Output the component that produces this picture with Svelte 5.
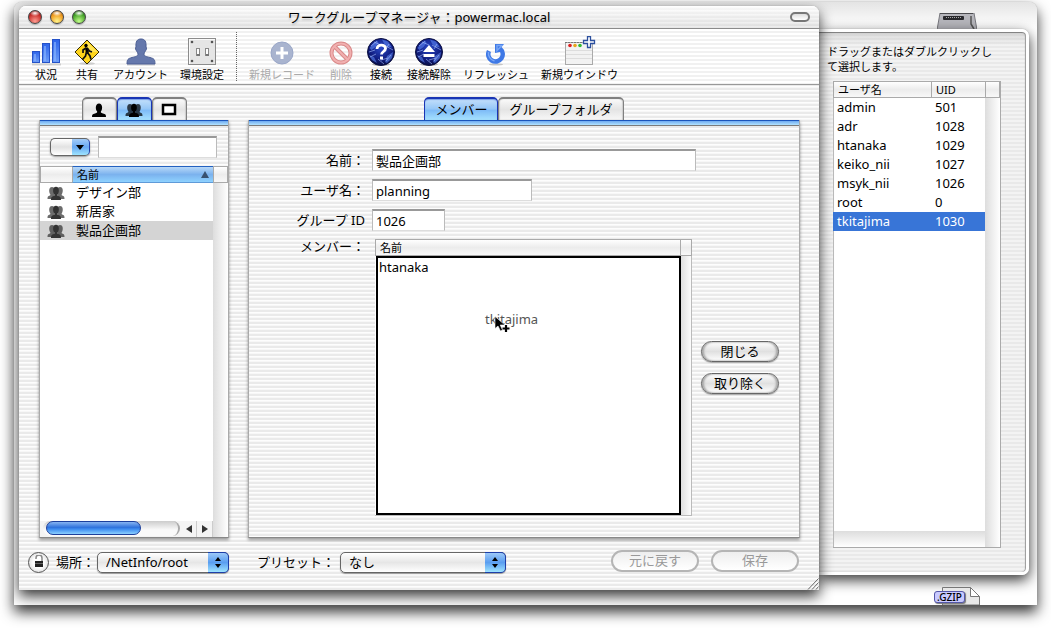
<script>
  const groups = ['デザイン部', '新居家', '製品企画部'];
  const users = [
    ['admin', '501'],
    ['adr', '1028'],
    ['htanaka', '1029'],
    ['keiko_nii', '1027'],
    ['msyk_nii', '1026'],
    ['root', '0'],
    ['tkitajima', '1030']
  ];
  const members = ['htanaka'];
  let tab = $state('members');
  let kind = $state('groups');
  let selectedGroup = $state('製品企画部');
  let selectedUser = $state('tkitajima');
</script>

{#snippet group()}
  <svg width="18" height="14" viewBox="0 0 18 14" aria-hidden="true">
    <g fill="currentColor">
      <g opacity=".72">
        <path d="M.5 13c0-2 .2-3 2.400-3.500.6-.2.6-1 .2-1.500C1.800 6 1.500 1 5 1s3 5 2 7l.5 2v3zM17.500 13c0-2-.2-3-2.400-3.500-.6-.2-.6-1-.2-1.500C16.200 6 16.500 1 13 1s-3 5-2 7l-.5 2v3z" />
      </g>
      <path d="M4 14c0-2.500.5-3.500 2.900-4 .8-.3.7-1.100.3-1.700C5.600 6 5.500.7 9 .7s3.400 5.300 1.800 7.600c-.4.6-.5 1.400.3 1.700 2.400.5 2.900 1.500 2.900 4z" />
    </g>
  </svg>
{/snippet}

{#snippet globe()}
  <ellipse cx="14" cy="26.500" rx="9" ry="1.500" fill="#888" opacity=".6" />
  <circle cx="14" cy="14" r="13.500" fill="url(#globe)" stroke="#0c1040" />
  <path d="M2.500 10l4-5 4-2 1 2-3 4-4 3zM15 1.500l6 2 4 6-5-1-3-3zM2 17l5 2 3 6-5-3zM20 18l6-4-1 6-5 5-2-1z" fill="#5c86f5" opacity=".6" />
  <path d="M2 14l6-2M7 4l7 3M17 7l9 5M11 21l6 5M4 8l6-5M19 23l5-6M3 19l6-3M22 6l-3 5M14 22l7-2" stroke="#a9c2ff" fill="none" opacity=".6" />
{/snippet}

<main class="desktop">
  <div class="back">
    <svg class="drive" width="40" height="17" viewBox="0 0 40 17" aria-hidden="true">
      <path d="M3 0h34l3 17H0z" fill="#b6b6bc" stroke="#77777d" />
      <path d="M3 .500h33" stroke="#4b4b4f" />
      <rect x="6" y="3" width="21" height="4" rx="1" fill="#29292d" />
      <path d="M9 4.500h15" stroke="#aaa" stroke-dasharray="1 1" />
      <path d="M34 3v8l3 5" stroke="#555" fill="none" stroke-width="1.500" />
    </svg>

    <section class="window" aria-label="ワークグループマネージャ">
      <header class="titlebar">
        <div class="lights">
          <button class="light red" aria-label="閉じる"></button>
          <button class="light yellow" aria-label="しまう"></button>
          <button class="light green" aria-label="拡大"></button>
        </div>
        <h1>ワークグループマネージャ：powermac.local</h1>
        <div class="right-end"><button class="pill" aria-label="ツールバー"></button></div>
      </header>

      <nav class="toolbar">
        <button class="tool">
          <svg width="30" height="28" viewBox="0 0 30 28" aria-hidden="true">
            <path d="M1 25.500h29v2H1z" fill="#999" opacity=".4" />
            <g fill="url(#bar)" stroke="#2552c8">
              <rect x="1.500" y="13.500" width="7" height="11" /><rect x="11.500" y="5.500" width="7" height="19" /><rect x="21.500" y="1.500" width="7" height="23" />
            </g>
            <path d="M4 16v7M14 8v15M24 4v19" stroke="#8db8ff" stroke-width="2" opacity=".6" />
          </svg>
          <span>状況</span>
        </button>
        <button class="tool">
          <svg width="26" height="28" viewBox="0 0 26 28" aria-hidden="true">
            <ellipse cx="13" cy="25.500" rx="8" ry="1.500" fill="#999" opacity=".4" />
            <path d="M13 2l12 12-12 12L1 14z" fill="#ffd51c" stroke="#332b05" />
            <path d="M13 3.500L23.500 14 13 14z" fill="#fff080" opacity=".6" />
            <circle cx="12" cy="7.500" r="1.700" />
            <path d="M11 9.500h3l1 5-3 1z" />
            <path d="M12 10l-3 2v3M13.500 10.500l2 2.500 2.500 1M13 14l3 4 1 3.500M12.500 14l-1 4-3 3.500" fill="none" stroke="#111" stroke-width="1.700" />
          </svg>
          <span>共有</span>
        </button>
        <button class="tool">
          <svg width="30" height="28" viewBox="0 0 30 28" aria-hidden="true">
            <path d="M1 26.500h28v1H1z" fill="#999" opacity=".5" />
            <path d="M1 26c0-4.500 1-5.500 5-6.500 4-1 6-1.300 6-3.500 0-1.200-.7-1.500-1.200-2.800-1-.2-1.800-3.700-.8-4.200C9.600 3.500 11 1 15 1s5.400 2.500 5 8c1 .5.2 4-.8 4.200-.5 1.300-1.200 1.600-1.200 2.800 0 2.200 2 2.500 6 3.500 4 1 5 2 5 6.500z" fill="#6578ac" stroke="#4d5f94" />
          </svg>
          <span>アカウント</span>
        </button>
        <button class="tool">
          <svg width="28" height="28" viewBox="0 0 28 28" aria-hidden="true">
            <rect x=".5" y=".5" width="27" height="26" fill="#e5e5e5" stroke="#8c8c8c" />
            <path d="M1.500 26V1.500H27" fill="none" stroke="#fafafa" />
            <g fill="#555"><circle cx="4" cy="4" r="1.300" /><circle cx="24" cy="4" r="1.300" /><circle cx="4" cy="23" r="1.300" /><circle cx="24" cy="23" r="1.300" /></g>
            <g fill="#fff" stroke="#888"><rect x="8.500" y="10.500" width="3" height="7" /><rect x="17.500" y="10.500" width="3" height="7" /></g>
            <path d="M9 16h3v2H9zM18 16h3v2h-3z" fill="#777" />
          </svg>
          <span>環境設定</span>
        </button>
        <i class="divider"></i>
        <button class="tool" disabled>
          <svg width="26" height="28" viewBox="0 0 26 28" aria-hidden="true">
            <circle cx="13" cy="15" r="11" fill="#a9b4cf" stroke="#9aa7c8" />
            <path d="M13 9v12M7 15h12" stroke="#fff" stroke-width="3" />
          </svg>
          <span>新規レコード</span>
        </button>
        <button class="tool" disabled>
          <svg width="26" height="28" viewBox="0 0 26 28" aria-hidden="true">
            <circle cx="13" cy="15" r="9.500" fill="none" stroke="#d98a8a" stroke-width="4" />
            <path d="M6.500 8.500l13 13" stroke="#d98a8a" stroke-width="4" />
            <circle cx="13" cy="15" r="9.500" fill="none" stroke="#f1b0b0" stroke-width="2" />
            <path d="M6.500 8.500l13 13" stroke="#f1b0b0" stroke-width="2" />
          </svg>
          <span>削除</span>
        </button>
        <button class="tool">
          <svg width="28" height="28" viewBox="0 0 28 28" aria-hidden="true">
            {@render globe()}
            <path d="M10 11c0-5 8.500-5 8.500-.5 0 3-4 3-4 6" fill="none" stroke="#fff" stroke-width="2.800" />
            <rect x="13" y="18.500" width="3" height="3" fill="#fff" />
          </svg>
          <span>接続</span>
        </button>
        <button class="tool">
          <svg width="28" height="28" viewBox="0 0 28 28" aria-hidden="true">
            {@render globe()}
            <path d="M14 7l6 7H8zM8.500 16h11v3h-11z" fill="#fff" />
          </svg>
          <span>接続解除</span>
        </button>
        <button class="tool">
          <svg width="22" height="28" viewBox="0 0 22 28" aria-hidden="true">
            <ellipse cx="11" cy="26.500" rx="7" ry="1" fill="#999" opacity=".5" />
            <path d="M2 12l4 2a5 5 0 1 0 9 0l-5 1V6h9l-2.500 3A9.500 9.500 0 1 1 2 12z" fill="#3f79e6" />
            <path d="M3.500 14a7.800 7.800 0 0 0 6 9M12 7.500h5l-5 5z" fill="none" stroke="#78a6f5" stroke-width="1.500" />
          </svg>
          <span>リフレッシュ</span>
        </button>
        <button class="tool">
          <svg width="32" height="30" viewBox="0 0 32 30" aria-hidden="true">
            <rect x="1.500" y="6.500" width="27" height="22" fill="#f2f2f2" stroke="#aaa" />
            <path d="M1 6.500h28" stroke="#777" stroke-dasharray="2 1" />
            <path d="M2 14.500h26M2 18.500h26M2 22.500h26" stroke="#ddd" />
            <circle cx="6" cy="9.500" r="1.800" fill="#d22" /><circle cx="11" cy="9.500" r="1.800" fill="#e7a51e" /><circle cx="16" cy="9.500" r="1.800" fill="#3b3" />
            <path d="M23.500.500h3v4h4v3h-4v4h-3v-4h-4v-3h4z" fill="#fff" stroke="#2c4f9e" stroke-width="1.300" />
          </svg>
          <span>新規ウインドウ</span>
        </button>
      </nav>

      <div class="body">
        <aside class="side">
          <div class="tabs" role="tablist">
            <button role="tab" aria-label="ユーザ" aria-selected={kind === 'users'} class:on={kind === 'users'} onclick={() => (kind = 'users')}>
              <svg width="16" height="14" viewBox="0 0 16 14" aria-hidden="true"><path d="M1 14c0-2.500.5-3 3-3.600C6.200 10 6.500 9.500 6 8.300 4.200 6.500 4.200.500 8 .500s3.800 6 2 7.800c-.5 1.200-.2 1.700 2 2.100 2.500.6 3 1.100 3 3.600z" /></svg>
            </button>
            <button role="tab" aria-label="グループ" aria-selected={kind === 'groups'} class:on={kind === 'groups'} onclick={() => (kind = 'groups')}>
              {@render group()}
            </button>
            <button role="tab" aria-label="コンピュータ" aria-selected={kind === 'lists'} class:on={kind === 'lists'} onclick={() => (kind = 'lists')}>
              <svg width="16" height="14" viewBox="0 0 16 14" aria-hidden="true"><rect x="2" y="2" width="12" height="9" fill="#fff" stroke="#000" stroke-width="2.500" /></svg>
            </button>
          </div>
          <div class="pane">
            <div class="search">
              <button class="mini" aria-label="検索条件"><i></i></button>
              <input aria-label="検索" />
            </div>
            <div class="list">
              <table>
                <colgroup><col class="c-icon" /><col /><col class="c-track" /></colgroup>
                <thead><tr><th></th><th class="sorted"><div>名前<i class="up"></i></div></th><th></th></tr></thead>
                <tbody>
                  {#each groups as name}
                    <tr class:chosen={name === selectedGroup} onclick={() => (selectedGroup = name)}>
                      <td class="ic">{@render group()}</td><td>{name}</td>
                    </tr>
                  {/each}
                </tbody>
              </table>
              <div class="hscroll">
                <div class="groove"><i class="thumb"></i></div>
                <button aria-label="左へ"><i class="left"></i></button>
                <button aria-label="右へ"><i class="right"></i></button>
              </div>
            </div>
          </div>
        </aside>

        <section class="detail">
          <div class="tabs text" role="tablist">
            <button role="tab" aria-selected={tab === 'members'} class:on={tab === 'members'} onclick={() => (tab = 'members')}>メンバー</button>
            <button role="tab" aria-selected={tab === 'folder'} class:on={tab === 'folder'} onclick={() => (tab = 'folder')}>グループフォルダ</button>
          </div>
          <div class="pane form">
            <label for="name">名前：</label>
            <input id="name" class="wide" value="製品企画部" />
            <label for="short">ユーザ名：</label>
            <input id="short" class="mid" value="planning" />
            <label for="gid">グループ ID</label>
            <input id="gid" class="short" value="1026" />
            <span class="caption">メンバー：</span>
            <div class="members">
              <div class="box">
                <table>
                  <colgroup><col /><col class="c-slim" /></colgroup>
                  <thead><tr><th>名前</th><th></th></tr></thead>
                </table>
                <div class="drop">
                  <ul>
                    {#each members as m}<li>{m}</li>{/each}
                  </ul>
                  <div class="drag">
                    tkitajima
                    <svg width="17" height="18" viewBox="0 0 17 18" aria-hidden="true">
                      <path d="M1 .500v12l3-2.500 2.500 5 2-1-2.300-5H11z" stroke="#fff" stroke-width=".6" />
                      <path d="M12 9v7M8.500 12.500h7" stroke="#000" stroke-width="2.200" />
                    </svg>
                  </div>
                </div>
              </div>
              <div class="actions">
                <button class="push">閉じる</button>
                <button class="push">取り除く</button>
              </div>
            </div>
          </div>
        </section>
      </div>

      <footer class="foot">
        <button class="lock" aria-label="ロック">
          <svg width="12" height="14" viewBox="0 0 12 14" aria-hidden="true">
            <path d="M3 4V3a3 3 0 0 1 6 0v4" fill="none" stroke="#888" stroke-width="1.500" />
            <rect x="2" y="6" width="8" height="6" fill="#222" /><path d="M2 8.500h8" stroke="#666" />
          </svg>
        </button>
        <label for="place">場所：</label>
        <div class="popup place"><select id="place"><option>/NetInfo/root</option></select><i class="cap"></i></div>
        <label for="preset" class="preset">プリセット：</label>
        <div class="popup pre"><select id="preset"><option>なし</option></select><i class="cap"></i></div>
        <div class="end">
          <button class="push" disabled>元に戻す</button>
          <button class="push" disabled>保存</button>
        </div>
        <svg class="grip" width="12" height="12" viewBox="0 0 12 12" aria-hidden="true"><path d="M1 11.500l10.500-11M5 11.500l6.500-7M9 11.500l2.500-3" stroke="#666" /></svg>
      </footer>
    </section>

    <aside class="drawer">
      <p>ドラッグまたはダブルクリックして選択します。</p>
      <div class="users">
        <table>
          <colgroup><col /><col class="c-uid" /><col class="c-track" /></colgroup>
          <thead><tr><th>ユーザ名</th><th>UID</th><th></th></tr></thead>
          <tbody>
            {#each users as [name, uid]}
              <tr class:hot={name === selectedUser} onclick={() => (selectedUser = name)}><td>{name}</td><td>{uid}</td></tr>
            {/each}
          </tbody>
        </table>
        <div class="blank"></div>
      </div>
    </aside>

    <div class="file">
      <svg width="38" height="18" viewBox="0 0 38 18" aria-hidden="true">
        <path d="M.500 18V.500h28l9 9V18z" fill="#e8e8e8" stroke="#777" /><path d="M28.500.500v9h9z" fill="#fff" stroke="#777" />
      </svg>
      <span>.GZIP</span>
    </div>
  </div>

  <svg width="0" height="0" class="defs" aria-hidden="true">
    <defs>
      <linearGradient id="bar" x1="0" y1="0" x2="0" y2="1"><stop offset="0" stop-color="#2c63ea" /><stop offset="1" stop-color="#6c9df8" /></linearGradient>
      <radialGradient id="globe" cx=".5" cy=".35" r=".7"><stop offset="0" stop-color="#2a49c8" /><stop offset=".6" stop-color="#101d80" /><stop offset="1" stop-color="#050938" /></radialGradient>
    </defs>
  </svg>
</main>

<style>
  :global(body) { margin: 0; background: #fff; }
  .desktop {
    --stripe: repeating-linear-gradient(#fdfdfd 0 1px, #f7f7f7 1px 2px, #eaeaea 2px 4px);
    display: flex;
    box-sizing: border-box;
    min-height: 100vh;
    padding: 2px 14px 23px;
    overflow: hidden;
    font: 13px/18px 'Noto Sans', 'Noto Sans CJK JP', sans-serif;
    color: #000;
  }
  button, input, select { font: inherit; color: inherit; margin: 0; box-sizing: border-box; }
  button { padding: 0; border: 0; background: none; }
  svg { display: block; flex: none; }
  table { width: 100%; border-collapse: separate; border-spacing: 0; table-layout: fixed; }
  .defs { position: absolute; }

  .back {
    position: relative;
    display: flex;
    flex: 1;
    padding: 4px 8px 15px 5px;
    border-radius: 8px 8px 0 0;
    background: linear-gradient(#e4e4e4, #fff 26px);
    box-shadow: 0 0 1px #888, 0 7px 14px rgba(0, 0, 0, .8);
    overflow: hidden;
  }
  .drive { position: absolute; top: 11px; right: 60px; }
  .file { position: absolute; right: 57px; bottom: 0; display: flex; height: 18px; }
  .file span {
    position: absolute;
    left: -8px;
    top: 4px;
    padding: 0 2px;
    border: 1px solid #5457a8;
    border-radius: 3px;
    background: #c9caff;
    box-shadow: 1px 1px 1px #777;
    font-size: 10px;
    line-height: 10px;
    font-weight: 500;
  }

  .window {
    position: relative;
    z-index: 2;
    display: flex;
    flex-direction: column;
    flex: 1;
    min-width: 0;
    border-radius: 7px 7px 0 0;
    background: var(--stripe);
    box-shadow: 0 0 1px #777, 0 6px 14px rgba(0, 0, 0, .8);
  }
  .titlebar {
    display: flex;
    align-items: center;
    height: 22px;
    padding: 0 9px;
    border-bottom: 1px solid #8a8a8a;
    border-radius: 7px 7px 0 0;
    background: linear-gradient(rgba(255, 255, 255, .7), rgba(200, 200, 200, .35)), var(--stripe);
  }
  h1 { margin: 0; text-align: center; font-size: 13px; line-height: 20px; font-weight: 400; text-shadow: 0 2px 2px #bbb; }
  .lights { display: flex; flex: 1; gap: 8px; }
  .right-end { display: flex; flex: 1; justify-content: flex-end; }
  .light { width: 14px; height: 14px; border: 1px solid #444; border-radius: 50%; box-shadow: 0 1px 1px #aaa; }
  .red { background: radial-gradient(ellipse 5px 3px at 50% 18%, #fff, transparent), radial-gradient(circle at 50% 85%, #ff9d92, #c8302c 60%, #761414); }
  .yellow { background: radial-gradient(ellipse 5px 3px at 50% 18%, #fff, transparent), radial-gradient(circle at 50% 85%, #fff58c, #f09a1e 60%, #8a4a06); }
  .green { background: radial-gradient(ellipse 5px 3px at 50% 18%, #fff, transparent), radial-gradient(circle at 50% 85%, #c4ff8c, #48a52b 60%, #155210); }
  .pill { width: 20px; height: 10px; border: 2px solid #777; border-radius: 5px; background: linear-gradient(#ddd, #fff); }

  .toolbar {
    display: flex;
    gap: 12px;
    height: 55px;
    padding: 0 12px;
    border-bottom: 1px solid #999;
    background: repeating-linear-gradient(#fff 0 2px, #f1f1f1 2px 4px);
  }
  .tool { display: flex; flex-direction: column; align-items: center; justify-content: flex-end; min-width: 28px; padding-bottom: 2px; font-size: 11px; line-height: 15px; white-space: nowrap; }
  .tool svg { margin-bottom: 1px; }
  .tool:disabled { color: #aaa; }
  .divider { margin: 3px 0; border-left: 1px dotted #666; }

  .body { display: flex; flex: 1; gap: 19px; padding: 12px 19px 0 20px; }
  .side { display: flex; flex-direction: column; width: 190px; }
  .detail { display: flex; flex-direction: column; flex: 1; min-width: 0; }
  .tabs { display: flex; justify-content: center; height: 23px; }
  .tabs button {
    display: flex;
    align-items: center;
    justify-content: center;
    width: 35px;
    border: 2px solid #808080;
    border-width: 2px 1px 0;
    border-radius: 5px 5px 0 0;
    background: linear-gradient(#fafafa, #e4e4e4 50%, #f8f8f8);
    box-shadow: inset 1px 0 1px #ccc, inset -1px 0 1px #ccc;
  }
  .tabs.text button { width: auto; padding: 0 10px 1px; }
  .tabs button.on { border-color: #1a35b4; background: linear-gradient(#c4e0fb, #98c8f7 45%, #7fbcf7 55%, #a6e2ff); box-shadow: inset 0 1px 1px #7aa0e8; }
  .pane {
    display: flex;
    flex-direction: column;
    flex: 1;
    border: 1px solid #aaa;
    border-top: 0;
    border-bottom-color: #888;
    background: linear-gradient(#1b55bb 0 1px, #6eaaf0 1px, #b3e4ff 5px, #7b7b7b 5px 6px, transparent 6px), var(--stripe);
    box-shadow: 0 2px 3px rgba(0, 0, 0, .4);
  }
  input {
    height: 22px;
    padding: 0 4px;
    border: 1px solid #bbb;
    border-top: 2px solid #999;
    border-bottom-color: #ddd;
    border-radius: 0;
    background: #fff;
    outline: 0;
  }

  .search { display: flex; align-items: center; gap: 8px; padding: 16px 11px 8px 10px; }
  .search input { flex: 1; min-width: 0; }
  .mini {
    display: flex;
    align-items: center;
    justify-content: flex-end;
    width: 40px;
    height: 18px;
    padding-right: 5px;
    border: 1px solid #666;
    border-right-color: #2340a8;
    border-radius: 5px;
    background: linear-gradient(#a4ccf8, #68a8f2 50%, #9ee4ff) right / 17px 100% no-repeat, linear-gradient(#fff, #e2e2e2 50%, #fff);
    box-shadow: 0 1px 2px #999;
  }
  .mini i { border: 4px solid transparent; border-top: 5px solid #000; border-bottom: 0; }

  .list { display: flex; flex-direction: column; flex: 1; background: linear-gradient(90deg, #fff calc(100% - 15px), #ddd calc(100% - 15px), #fff); }
  .c-icon { width: 32px; }
  .c-track { width: 15px; }
  .c-slim { width: 12px; }
  .c-uid { width: 54px; }
  th {
    box-sizing: border-box;
    height: 17px;
    padding: 0 4px;
    border: 1px solid #aaa;
    border-width: 1px 0 1px 1px;
    background: linear-gradient(#fff, #ececec 50%, #f8f8f8);
    font-size: 11px;
    line-height: 14px;
    font-weight: 400;
    text-align: left;
  }
  th:last-child { border-right-width: 1px; }
  th.sorted { border-top-color: #2361c0; border-bottom-color: #5f9ad8; background: linear-gradient(#b8d8f8, #7bb2ee 50%, #8ed2ff); }
  th.sorted div { display: flex; align-items: center; justify-content: space-between; }
  .up { border: 4px solid transparent; border-bottom: 7px solid #38506f; border-top: 0; }
  td { height: 19px; padding: 0 4px; line-height: 19px; white-space: nowrap; }
  td.ic { padding: 0 0 0 7px; color: #333; }
  .chosen td { background: #d4d4d4; }
  .hot td { background: #3875d7; color: #fff; }

  .hscroll { display: flex; height: 16px; margin: auto 15px 0 0; background: #f4f4f4; }
  .groove { flex: 1; margin: 0 1px 1px 3px; border-right: 2px solid #aaa; border-radius: 8px; background: linear-gradient(#ccc, #fafafa 60%); }
  .thumb { display: block; box-sizing: border-box; width: 70%; height: 14px; margin-left: 3px; border: 1px solid #1c3f9c; border-radius: 7px; background: linear-gradient(#87b4f2, #2f72dc 45%, #3f8df0 60%, #8cd0ff); }
  .hscroll button { display: flex; align-items: center; justify-content: center; width: 16px; border-right: 1px solid #ccc; }
  .left { border: 4px solid transparent; border-right: 6px solid #333; border-left: 0; }
  .right { border: 4px solid transparent; border-left: 6px solid #333; border-right: 0; }

  .form { display: grid; grid-template-columns: 116px 1fr; grid-template-rows: 22px 22px 22px 1fr; gap: 8px 7px; padding: 29px 20px 21px 0; }
  .form label, .caption { text-align: right; line-height: 23px; white-space: nowrap; }
  .caption { line-height: 14px; }
  .form input { padding: 0 3px; }
  .wide { width: 324px; }
  .mid { width: 160px; }
  .short { width: 73px; }
  .members { display: flex; gap: 9px; padding-left: 3px; }
  .box { display: flex; flex-direction: column; flex: 1; background: linear-gradient(90deg, #fff calc(100% - 12px), #ddd calc(100% - 12px), #fff); box-shadow: inset -1px -1px #bbb; }
  .drop { position: relative; flex: 1; margin: 0 11px 1px 1px; border: 2px solid #000; background: #fff; }
  ul { margin: 0; padding: 0 1px; list-style: none; line-height: 18px; }
  .drag { position: absolute; left: 107px; top: 52px; color: #555; }
  .drag svg { position: absolute; left: 9px; top: 6px; }
  .actions { display: flex; flex-direction: column; gap: 11px; padding-top: 102px; }
  .push {
    width: 78px;
    height: 21px;
    border: 1px solid #666;
    border-radius: 11px;
    background: linear-gradient(#fff, #e0e0e0 50%, #fff);
    box-shadow: inset 2px 0 2px #aaa, inset -2px 0 2px #aaa, 0 1px 1px #aaa;
    line-height: 17px;
  }
  .push:disabled { border: 2px solid #b5b5b5; box-shadow: none; background: linear-gradient(#eee, #fff); color: #999; line-height: 15px; }

  .foot { position: relative; display: flex; align-items: center; height: 48px; padding: 0 20px 4px 9px; }
  .lock { display: flex; align-items: center; justify-content: center; width: 21px; height: 21px; margin-right: 7px; border: 1px solid #555; border-radius: 50%; background: radial-gradient(#fff 40%, #ccc); }
  .popup { position: relative; display: flex; margin-left: 2px; }
  .popup select {
    appearance: none;
    width: 100%;
    height: 21px;
    padding: 0 26px 0 8px;
    border: 1px solid #666;
    border-radius: 5px;
    background: linear-gradient(#fff, #e6e6e6 50%, #fff);
    box-shadow: 0 1px 1px #999;
    line-height: 18px;
  }
  .place { width: 132px; }
  .pre { width: 166px; margin-left: 5px; }
  .preset { margin-left: 28px; }
  .cap {
    position: absolute;
    inset: 0 0 0 auto;
    width: 21px;
    border-radius: 0 5px 5px 0;
    border: 1px solid #1e3fa8;
    border-left: 0;
    box-sizing: border-box;
    background: linear-gradient(#9cc8f8, #5a9ef0 50%, #9ee4ff);
    pointer-events: none;
  }
  .cap::before, .cap::after { content: ''; position: absolute; left: 7px; border: 3px solid transparent; }
  .cap::before { top: 4px; border-bottom: 4px solid #000; border-top: 0; }
  .cap::after { bottom: 4px; border-top: 4px solid #000; border-bottom: 0; }
  .end { display: flex; gap: 12px; margin: -3px 0 0 auto; }
  .end .push { width: 88px; height: 22px; }
  .grip { position: absolute; right: 0; bottom: 0; }

  .drawer {
    position: relative;
    display: flex;
    flex-direction: column;
    box-sizing: border-box;
    width: 210px;
    margin: 23px 0 15px;
    padding: 12px 25px 24px 8px;
    border: 3px solid #fff;
    border-left: 0;
    border-radius: 0 7px 7px 0;
    background: linear-gradient(rgba(180, 180, 180, .4), transparent 14px), repeating-linear-gradient(#f3f3f3 0 2px, #e9e9e9 2px 4px);
    box-shadow: inset -1px 0 1px #999, inset 0 1px 1px #777, 0 0 1px #777, 0 5px 14px rgba(0, 0, 0, .8);
  }
  .drawer p { margin: 0 0 7px; font-size: 11px; line-height: 15px; width: 167px; }
  .users { display: flex; flex-direction: column; flex: 1; margin-left: 6px; border: 1px solid #aaa; border-width: 0 1px 1px 0; background: linear-gradient(90deg, #bbb 1px, #fff 1px, #fff calc(100% - 15px), #ddd calc(100% - 15px), #fff); }
  .blank { height: 16px; margin: auto 15px 0 1px; background: linear-gradient(#ddd, #fff); }
  .users td { padding: 0 4px; }
</style>
